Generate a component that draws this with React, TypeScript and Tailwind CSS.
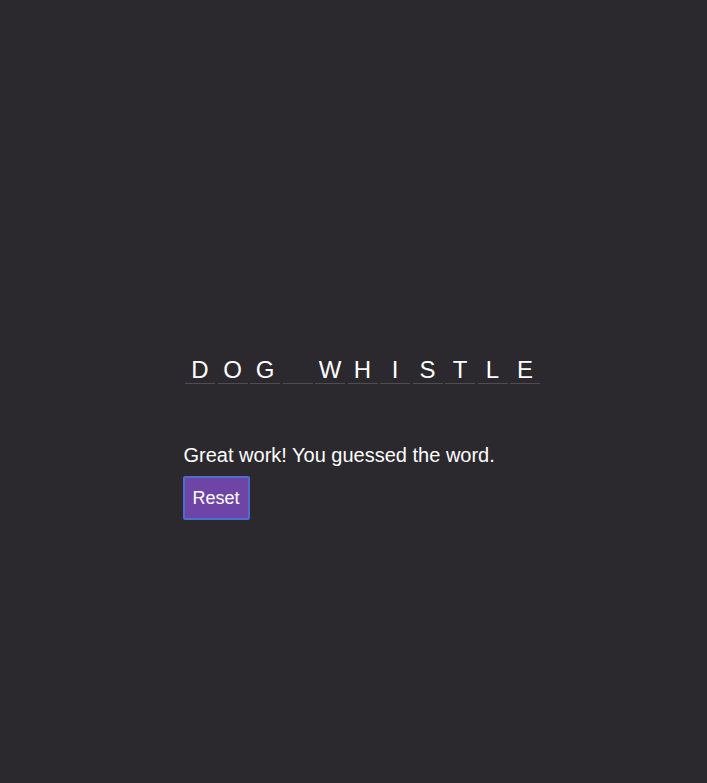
import React from "react";

const letters = ["D", "O", "G", " ", "W", "H", "I", "S", "T", "L", "E"];

export default function App() {
  return (
    <div
      className="min-h-[783px] w-full bg-[#2b292e] text-white"
      style={{ fontFamily: '"Liberation Sans", Arial, sans-serif' }}
    >
      <div className="mx-auto w-[340px] pt-[352px]">
        <div className="flex gap-[2.5px] pl-[1.5px]">
          {letters.map((l, i) => (
            <div
              key={i}
              className="w-[30px] h-[32px] shrink-0 border-b border-[#4f4d53] pt-[4px] text-center text-[24px] leading-[27px]"
            >
              {l === " " ? "\u00a0" : l}
            </div>
          ))}
        </div>
        <p className="mt-[59px] text-[20px] leading-[24px]">Great work! You guessed the word.</p>
        <button className="mt-[9px] -ml-[1px] h-[44px] w-[67px] rounded-[2px] border-2 border-[#4d6dcc] bg-[#6e45a6] text-[18px] text-white">
          Reset
        </button>
      </div>
    </div>
  );
}
